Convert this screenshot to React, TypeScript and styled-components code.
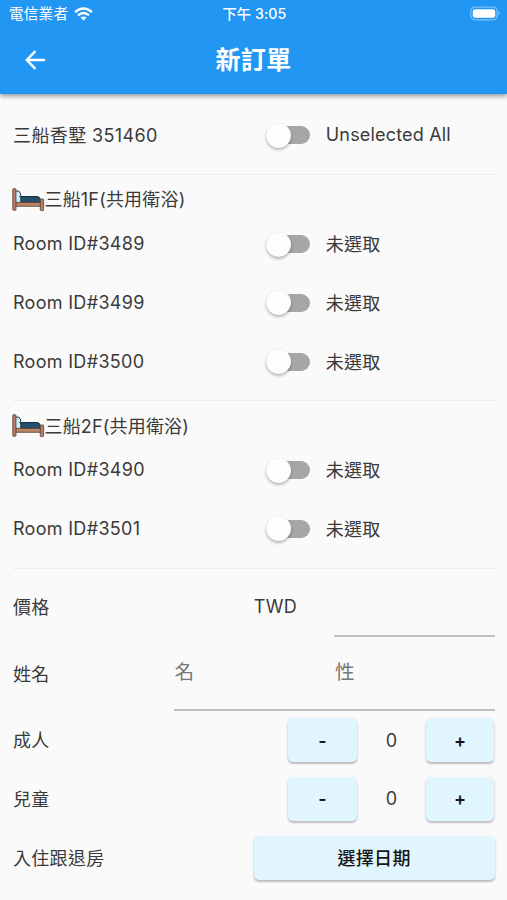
import React, { useState } from 'react';
import styled, { createGlobalStyle } from 'styled-components';

const GlobalStyle = createGlobalStyle`
  * { box-sizing: border-box; }
  body {
    margin: 0;
    background: #fafafa;
    color: #3a3a3a;
    font-family: Inter, "Noto Sans CJK TC", sans-serif;
    font-size: 18px;
  }
  button, input { font: inherit; color: inherit; }
`;

const Screen = styled.div`
  width: 507px;
  height: 900px;
  overflow: hidden;
  background: #fafafa;
`;

const Header = styled.header`
  height: 94px;
  background: #2196f3;
  color: #fff;
  box-shadow: 0 2px 5px rgba(0, 0, 0, 0.42);
`;

const StatusBar = styled.div`
  display: grid;
  grid-template-columns: 1fr auto 1fr;
  align-items: center;
  height: 27px;
  padding: 0 6px 0 9px;
  font-size: 14.6px;
  line-height: 20px;
`;

const Carrier = styled.div`
  display: flex;
  align-items: center;
  gap: 6px;
  letter-spacing: 0.2px;
`;

const Clock = styled.div`
  font-weight: 500;
  font-size: 14.2px;
  letter-spacing: 0.1px;
  padding-right: 1px;
`;

const BatteryIcon = styled.svg`
  justify-self: end;
`;

const TitleBar = styled.div`
  display: grid;
  grid-template-columns: 70px 1fr 70px;
  align-items: center;
  height: 65px;
`;

const BackButton = styled.button`
  display: flex;
  justify-content: center;
  padding: 0;
  border: 0;
  background: none;
`;

const Title = styled.h1`
  margin: 0;
  text-align: center;
  font-size: 25px;
  font-weight: 600;
  line-height: 34px;
  letter-spacing: 0.4px;
`;

const Form = styled.main`
  padding: 12px 12.5px 0 13px;
`;

const Row = styled.div<{ $cols: string; $height?: number }>`
  display: grid;
  grid-template-columns: ${(p) => p.$cols};
  align-items: center;
  height: ${(p) => p.$height ?? 58.75}px;
`;

const Label = styled.span<{ $spacing?: number; $cjk?: boolean }>`
  white-space: nowrap;
  line-height: 24px;
  padding-top: ${(p) => (p.$cjk ? 2 : 0)}px;
  letter-spacing: ${(p) => p.$spacing ?? 0.3}px;
`;

const Divider = styled.hr`
  height: 1px;
  margin: 9.3px 0;
  border: 0;
  background: #eeeeee;
`;

const GroupTitle = styled.div`
  display: flex;
  align-items: center;
  height: 30.3px;
  margin-left: -1px;
`;

const SwitchRow = styled.div`
  display: flex;
  align-items: center;
  gap: 16px;
  padding-left: 12px;
`;

const Track = styled.button`
  display: flex;
  align-items: center;
  width: 44px;
  height: 18px;
  padding: 0;
  border: 0;
  border-radius: 9px;
  background: #a6a6a6;
`;

const Thumb = styled.span<{ $on: boolean }>`
  flex: none;
  width: 25px;
  height: 25px;
  border-radius: 50%;
  margin-left: ${(p) => (p.$on ? 19 : 0)}px;
  background: #fdfdfd;
  box-shadow: 0 2px 3px rgba(0, 0, 0, 0.26), 0 0 1px rgba(0, 0, 0, 0.12);
`;

const Field = styled.input`
  width: 100%;
  height: calc(100% + 1px);
  padding: 0 0 2px 1px;
  border: 0;
  border-bottom: 2px solid #c0c0c0;
  border-radius: 0;
  background: transparent;
  outline: 0;
  font-size: 19.6px;
  &::placeholder { color: #777; opacity: 1; }
`;

const ActionButton = styled.button`
  height: 44px;
  padding: 0;
  border: 0;
  border-radius: 5px;
  background: #e1f5fe;
  color: #151515;
  font-weight: 600;
  letter-spacing: 0.3px;
  box-shadow: 0 2px 2px rgba(0, 0, 0, 0.2), 0 1px 3px rgba(0, 0, 0, 0.1);
`;

const DateButton = styled(ActionButton)`
  font-weight: 500;
  padding-bottom: 2px;
`;

const Count = styled.output`
  text-align: center;
`;

const Bed = () => (
  <svg width="32.5" height="25" viewBox="0 0 33 25">
    <path d="M3 4h4l2 3-1 3h12v7H3z" fill="#c9eef5" stroke="#24333c" strokeWidth="1" />
    <path d="M9 9.5h17q3 .5 3 6H9z" fill="#23506d" stroke="#142c3d" strokeWidth="1" />
    <path d="M3 15.4h27v4H3z" fill="#bd8468" stroke="#513b33" strokeWidth=".8" />
    <rect x="0.8" y="1.5" width="3.2" height="22" rx=".8" fill="#b77f65" stroke="#513b33" strokeWidth=".8" />
    <rect x="28.7" y="12" width="3.4" height="11.7" rx=".8" fill="#b77f65" stroke="#513b33" strokeWidth=".8" />
  </svg>
);

const Wifi = () => (
  <svg width="19" height="14" viewBox="0 0 19 14" fill="none" stroke="#fff" strokeWidth="2.4">
    <path d="M1.1 5.2Q9.5-2.4 17.9 5.2" />
    <path d="M4 8.3q5.5-4.8 11 0" />
    <path d="M6.5 10.6q3-2.4 6 0l-3 3z" fill="#fff" stroke="none" />
  </svg>
);

function Toggle({ off, on, cjk, spacing }: { off: string; on: string; cjk?: boolean; spacing?: number }) {
  const [active, setActive] = useState(false);
  return (
    <SwitchRow>
      <Track role="switch" aria-checked={active} onClick={() => setActive(!active)}>
        <Thumb $on={active} />
      </Track>
      <Label $cjk={cjk} $spacing={spacing}>{active ? on : off}</Label>
    </SwitchRow>
  );
}

function Counter({ label }: { label: string }) {
  const [count, setCount] = useState(0);
  return (
    <Row $cols="4fr 1fr 1fr 1fr">
      <Label $cjk>{label}</Label>
      <ActionButton onClick={() => setCount(Math.max(0, count - 1))}>-</ActionButton>
      <Count>{count}</Count>
      <ActionButton onClick={() => setCount(count + 1)}>+</ActionButton>
    </Row>
  );
}

const groups = [
  { title: '三船1F(共用衛浴)', rooms: [3489, 3499, 3500] },
  { title: '三船2F(共用衛浴)', rooms: [3490, 3501] },
];

export default function App() {
  return (
    <Screen>
      <GlobalStyle />
      <Header>
        <StatusBar>
          <Carrier>電信業者<Wifi /></Carrier>
          <Clock>下午 3:05</Clock>
          <BatteryIcon width="31" height="15" viewBox="0 0 31 15">
            <rect x=".8" y="1.2" width="26.4" height="12.6" rx="4" fill="none" stroke="#fff" strokeOpacity=".42" strokeWidth="1.2" />
            <rect x="2.8" y="3.2" width="22.4" height="8.6" rx="2.3" fill="#fff" />
            <path d="M28.5 5.3q2.4 2.2 0 4.4z" fill="#fff" fillOpacity=".45" />
          </BatteryIcon>
        </StatusBar>
        <TitleBar>
          <BackButton aria-label="返回">
            <svg width="20" height="20" viewBox="0 0 20 20" fill="none" stroke="#fff" strokeWidth="2.4">
              <path d="M10.4 1.2 1.8 10l8.6 8.8M2 10h18" />
            </svg>
          </BackButton>
          <Title>新訂單</Title>
        </TitleBar>
      </Header>
      <Form>
        <Row $cols="1fr 1fr">
          <Label $cjk $spacing={0.38}>三船香墅 351460</Label>
          <Toggle off="Unselected All" on="Selected All" spacing={0.18} />
        </Row>
        <Divider />
        {groups.map((group) => (
          <React.Fragment key={group.title}>
            <GroupTitle><Bed /><Label $cjk $spacing={0.18}>{group.title}</Label></GroupTitle>
            {group.rooms.map((id) => (
              <Row key={id} $cols="1fr 1fr">
                <Label>Room ID#{id}</Label>
                <Toggle off="未選取" on="已選取" cjk />
              </Row>
            ))}
            <Divider />
          </React.Fragment>
        ))}
        <Row $cols="3fr 1fr 2fr">
          <Label $cjk>價格</Label>
          <Label>TWD</Label>
          <Field aria-label="價格" />
        </Row>
        <Row $cols="1fr 1fr 1fr" $height={74}>
          <Label $cjk>姓名</Label>
          <Field placeholder="名" />
          <Field placeholder="性" />
        </Row>
        <Counter label="成人" />
        <Counter label="兒童" />
        <Row $cols="1fr 1fr">
          <Label $cjk>入住跟退房</Label>
          <DateButton>選擇日期</DateButton>
        </Row>
      </Form>
    </Screen>
  );
}
